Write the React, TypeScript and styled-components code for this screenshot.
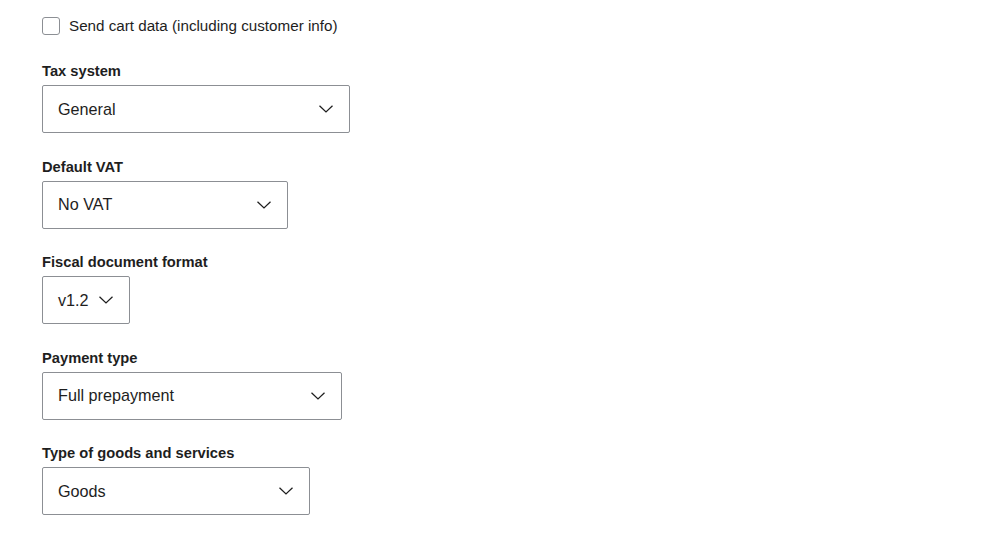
import styled, { createGlobalStyle } from "styled-components";

const GlobalStyle = createGlobalStyle`
  body {
    margin: 0;
    background: #ffffff;
    font-family: "Liberation Sans", Arial, sans-serif;
    color: #1e1e1e;
  }
`;

const Page = styled.div`
  padding: 16px 42px;
  display: flex;
  flex-direction: column;
`;

const CheckRow = styled.label`
  display: flex;
  align-items: center;
  gap: 9px;
  font-size: 15.2px;
  height: 19px;
  margin-bottom: 26px;
`;

const Box = styled.span`
  width: 18px;
  height: 18px;
  box-sizing: border-box;
  border: 1px solid #8c8f94;
  border-radius: 3px;
  background: #fff;
`;

const Field = styled.div`
  display: flex;
  flex-direction: column;
  gap: 4px;
  margin-bottom: 23.5px;
`;

const Label = styled.div`
  font-size: 14.7px;
  font-weight: 700;
  line-height: 20px;
`;

const Select = styled.div<{ $w: number }>`
  width: ${(p) => p.$w}px;
  height: 48px;
  box-sizing: border-box;
  border: 1px solid #8c8f94;
  border-radius: 2px;
  display: flex;
  align-items: center;
  justify-content: space-between;
  padding: 0 15px 0 15px;
  font-size: 16.2px;
  background: #fff;
`;

const Chevron = () => (
  <svg width="16" height="10" viewBox="0 0 16 10" fill="none">
    <path d="M1.5 1.8 L8 8 L14.5 1.8" stroke="#1e1e1e" strokeWidth="1.25" />
  </svg>
);

const fields = [
  { label: "Tax system", value: "General", w: 308 },
  { label: "Default VAT", value: "No VAT", w: 246 },
  { label: "Fiscal document format", value: "v1.2", w: 88 },
  { label: "Payment type", value: "Full prepayment", w: 300 },
  { label: "Type of goods and services", value: "Goods", w: 268 },
];

export default function App() {
  return (
    <>
      <GlobalStyle />
      <Page>
        <CheckRow>
          <Box />
          Send cart data (including customer info)
        </CheckRow>
        {fields.map((f) => (
          <Field key={f.label}>
            <Label>{f.label}</Label>
            <Select $w={f.w}>
              <span>{f.value}</span>
              <Chevron />
            </Select>
          </Field>
        ))}
      </Page>
    </>
  );
}
